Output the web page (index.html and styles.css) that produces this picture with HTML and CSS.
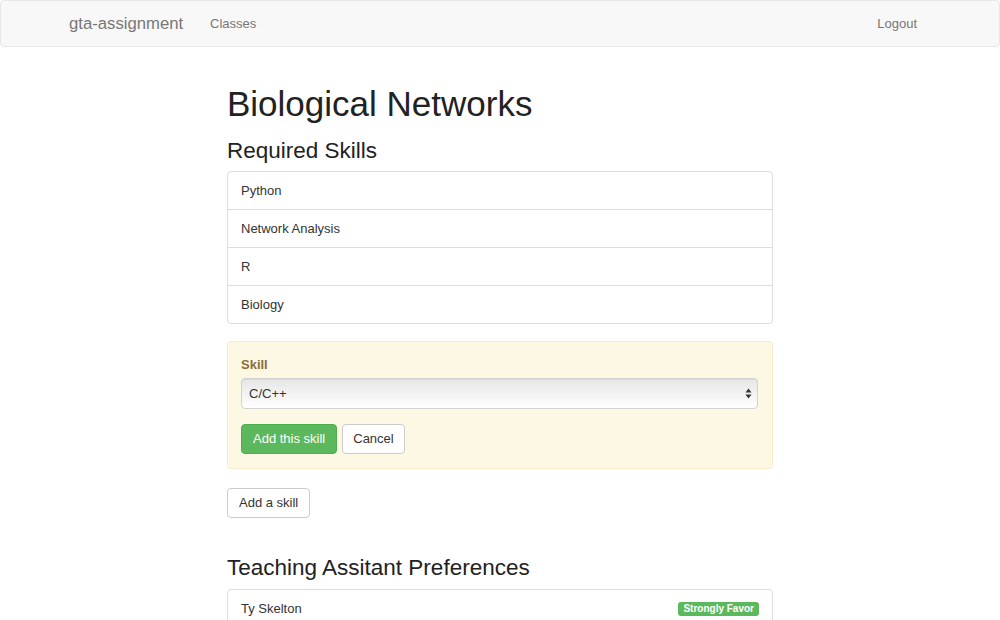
FILE: index.html
```html
<!DOCTYPE html>
<html>
<head>
<meta charset="utf-8">
<title>Biological Networks</title>
<link rel="stylesheet" href="styles.css">
</head>
<body>
<nav class="navbar">
  <div class="nav-left">
    <a class="brand" href="#">gta-assignment</a>
    <a class="nav-link" href="#">Classes</a>
  </div>
  <a class="nav-link" href="#">Logout</a>
</nav>
<main class="content">
  <h1 class="title">Biological Networks</h1>
  <h2 class="subtitle">Required Skills</h2>
  <ul class="list-group">
    <li class="list-item">Python</li>
    <li class="list-item">Network Analysis</li>
    <li class="list-item">R</li>
    <li class="list-item">Biology</li>
  </ul>
  <form class="well">
    <label class="field-label" for="skill">Skill</label>
    <div class="select-wrap">
      <select id="skill" class="select">
        <option>C/C++</option>
      </select>
      <span class="select-arrows">
        <svg width="7" height="11" viewBox="0 0 7 11"><path d="M3.5 0.5 L6.5 4.5 L0.5 4.5 Z" fill="#333"/><path d="M3.5 10.5 L6.5 6.5 L0.5 6.5 Z" fill="#333"/></svg>
      </span>
    </div>
    <div class="form-actions">
      <button type="button" class="btn btn-success">Add this skill</button>
      <button type="button" class="btn btn-default btn-narrow">Cancel</button>
    </div>
  </form>
  <button type="button" class="btn btn-default">Add a skill</button>
  <h2 class="subtitle subtitle-ta">Teaching Assitant Preferences</h2>
  <ul class="list-group">
    <li class="list-item list-item-split">Ty Skelton <span class="badge">Strongly Favor</span></li>
  </ul>
</main>
</body>
</html>
```

FILE: styles.css
```css
* { box-sizing: border-box; }
html, body { margin: 0; padding: 0; }
body {
  font-family: "Liberation Sans", Arial, sans-serif;
  font-size: 13px;
  line-height: 19px;
  color: #333;
  background: #fff;
  overflow: hidden;
}
a { text-decoration: none; }

.navbar {
  height: 47px;
  background: #f8f8f8;
  border: 1px solid #e7e7e7;
  border-radius: 4px;
  display: flex;
  align-items: center;
  justify-content: space-between;
  padding: 0 82px 0 68px;
}
.nav-left { display: flex; align-items: center; gap: 27px; }
.brand { font-size: 16.7px; color: #777; }
.nav-link { font-size: 13px; color: #777; }

.content {
  width: 546px;
  margin: 0 auto;
}
.title {
  font-size: 35px;
  line-height: 38px;
  font-weight: normal;
  color: #222;
  margin: 38px 0 0;
}
.subtitle {
  font-size: 22.5px;
  line-height: 26px;
  font-weight: normal;
  color: #222;
  margin: 15px 0 7px;
}
.subtitle-ta { margin-top: 37px; margin-bottom: 8px; }

.list-group {
  list-style: none;
  margin: 0 0 17px;
  padding: 0;
}
.list-item {
  border: 1px solid #ddd;
  padding: 9px 13px;
  line-height: 19px;
  margin-bottom: -1px;
  background: #fff;
}
.list-item:first-child { border-radius: 4px 4px 0 0; }
.list-item:last-child { border-radius: 0 0 4px 4px; margin-bottom: 0; }
.list-item:only-child { border-radius: 4px 4px 0 0; }
.list-item-split { display: flex; justify-content: space-between; align-items: center; }

.badge {
  background: #5cb85c;
  color: #fff;
  font-size: 10px;
  font-weight: bold;
  line-height: 10px;
  padding: 2px 5px 2px;
  border-radius: 3px;
}

.well {
  background: #fcf8e3;
  border: 1px solid #faebcc;
  border-radius: 4px;
  padding: 13px 14px 14px 13px;
  margin: 0 0 19px;
}
.field-label {
  display: block;
  color: #8a6d3b;
  font-weight: bold;
  line-height: 19px;
  margin: 0 0 4px;
}
.select-wrap { position: relative; margin-bottom: 15px; }
.select {
  display: block;
  width: 100%;
  height: 31px;
  -webkit-appearance: none;
  appearance: none;
  font-family: inherit;
  font-size: 13px;
  color: #333;
  padding: 0 24px 0 7px;
  border: 1px solid #d2d2d2;
  border-radius: 4px;
  background: linear-gradient(#e6e6e6, #ffffff);
  box-shadow: inset 0 1px 1px rgba(0,0,0,.06);
  outline: none;
}
.select-arrows {
  position: absolute;
  right: 6px;
  top: 10px;
  line-height: 0;
  pointer-events: none;
}

.btn {
  display: inline-block;
  font-family: inherit;
  font-size: 13px;
  line-height: 18px;
  padding: 5px 11px;
  border: 1px solid #ccc;
  border-radius: 4px;
  background: #fff;
  color: #333;
  margin: 0;
  cursor: pointer;
}
.btn-narrow { padding-left: 10px; padding-right: 10px; }
.btn-success {
  background: #5cb85c;
  border-color: #4cae4c;
  color: #fff;
}
.form-actions { display: flex; gap: 5px; }
```
